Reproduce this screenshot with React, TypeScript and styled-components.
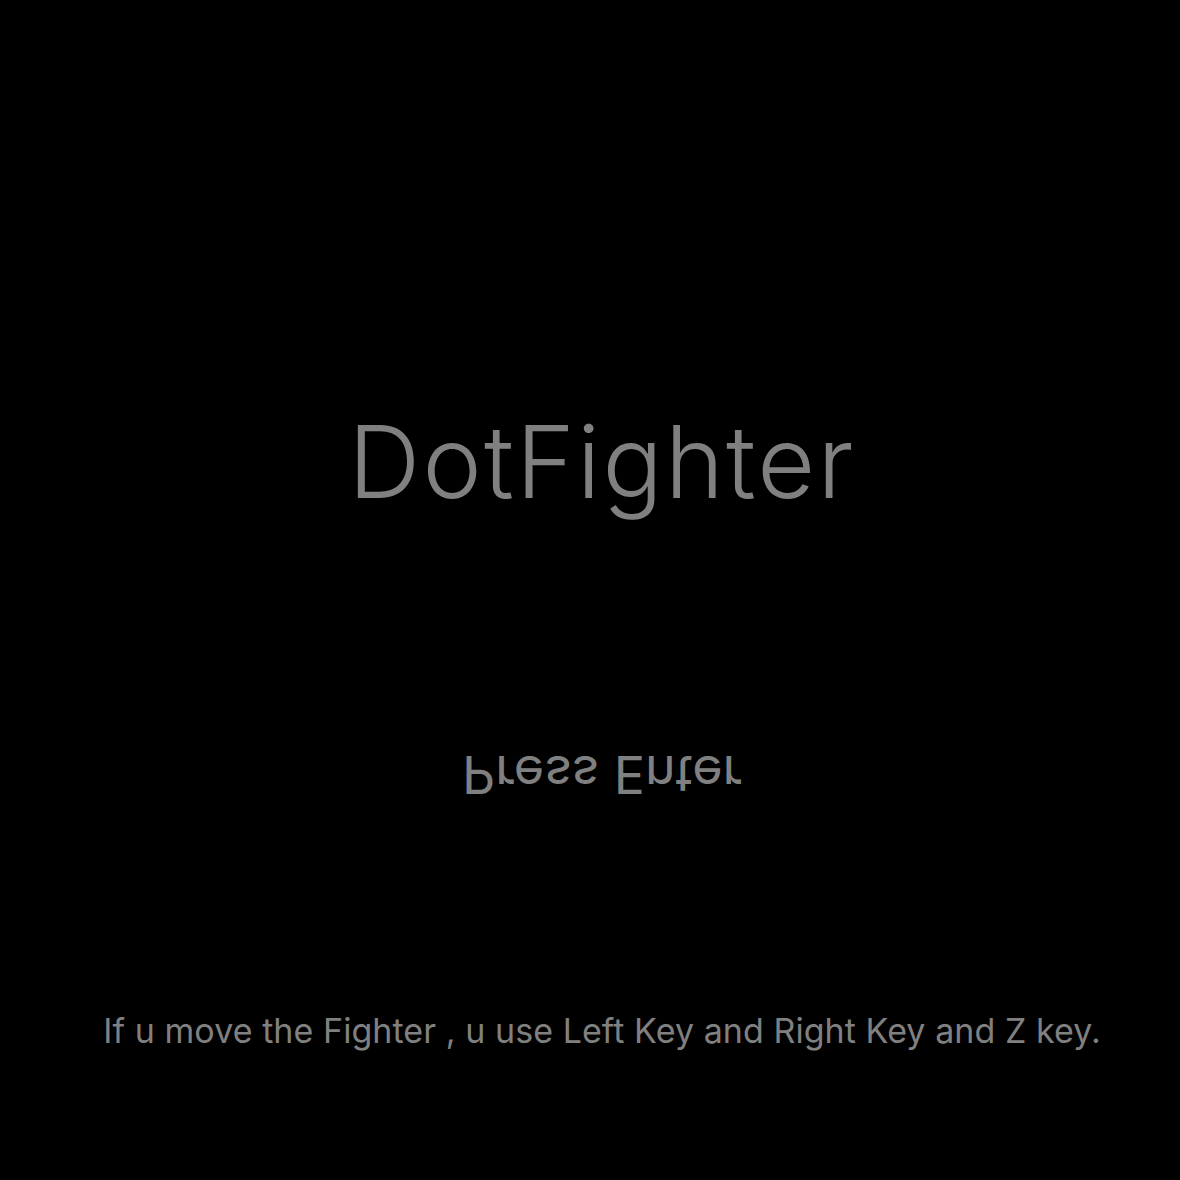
import React from "react";
import styled, { createGlobalStyle } from "styled-components";

const GlobalStyle = createGlobalStyle`
  html, body { margin: 0; padding: 0; background: #000; }
  body { font-family: Inter, "Noto Sans CJK JP", sans-serif; }
`;

const Screen = styled.main`
  width: 1180px;
  height: 1180px;
  box-sizing: border-box;
  background: #000;
  padding: 412px 0 0 24px;
  display: flex;
  flex-direction: column;
  align-items: center;
  color: #808080;
  overflow: hidden;
`;

const Title = styled.h1`
  margin: 0;
  font-size: 100px;
  font-weight: 350;
  line-height: 1;
  height: 100px;
  letter-spacing: 2.2px;
  white-space: nowrap;
`;

const Prompt = styled.div`
  margin-top: 236px;
  font-size: 52px;
  font-weight: 400;
  line-height: 1;
  height: 52px;
  white-space: nowrap;
  transform: scaleY(-1);
`;

const Help = styled.p`
  margin: 214px 0 0;
  font-size: 34px;
  font-weight: 400;
  line-height: 1;
  height: 34px;
  letter-spacing: 0.06px;
  white-space: nowrap;
`;

export default function App() {
  return (
    <>
      <GlobalStyle />
      <Screen>
        <Title>DotFighter</Title>
        <Prompt>Press Enter</Prompt>
        <Help>If u move the Fighter , u use Left Key and Right Key and Z key.</Help>
      </Screen>
    </>
  );
}
